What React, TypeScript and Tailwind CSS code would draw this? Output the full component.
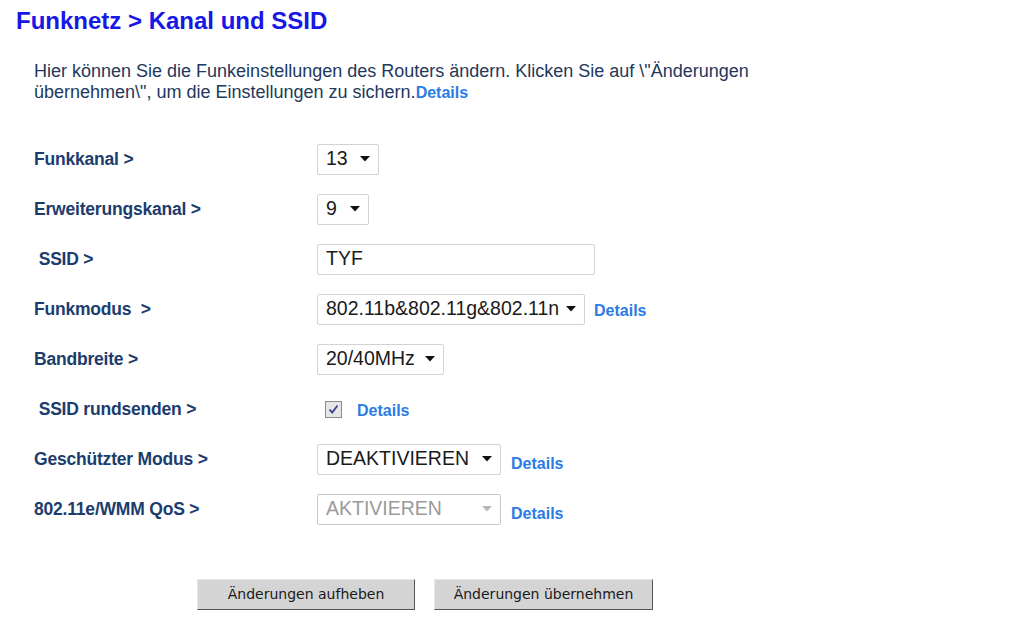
import type { ReactNode } from "react";

const labelClass = "text-[17.5px] font-bold tracking-[-0.2px] text-[#1c3c6e]";
const linkClass = "text-[16px] font-bold text-[#2b7be4]";

function Caret({ disabled }: { disabled?: boolean }) {
  return (
    <svg width="10" height="6" viewBox="0 0 10 6" className="shrink-0">
      <path d="M0 0 L10 0 L5 5.5 Z" fill={disabled ? "#b8b8b8" : "#111"} />
    </svg>
  );
}

function Select({ value, width, disabled }: { value: string; width: string; disabled?: boolean }) {
  return (
    <div
      className={`flex h-[31px] items-center justify-between gap-[6px] rounded-[2px] border bg-white pl-[8px] pr-[8px] text-[19.5px] ${width} ${
        disabled ? "border-[#c8c8c8] text-[#9a9a9a]" : "border-[#d3d3d3] text-[#1a1a1a]"
      }`}
    >
      <span className="whitespace-nowrap">{value}</span>
      <Caret disabled={disabled} />
    </div>
  );
}

function Details() {
  return <span className={linkClass}>Details</span>;
}

function Row({ label, children }: { label: string; children: ReactNode }) {
  return (
    <div className="flex h-[50px] items-center">
      <div className={`w-[283px] whitespace-pre ${labelClass}`}>{label}</div>
      <div className="flex items-center">{children}</div>
    </div>
  );
}

export default function App() {
  return (
    <div className="min-h-[620px] w-[1014px] bg-white font-['Liberation_Sans',Arial,sans-serif]">
      <h1 className="pl-[16px] pt-[7px] text-[24px] leading-[28px] font-bold text-[#1717e6]">
        Funknetz &gt; Kanal und SSID
      </h1>

      <p className="mt-[26px] w-[790px] pl-[34px] text-[18px] leading-[21px] text-[#22385c]">
        Hier können Sie die Funkeinstellungen des Routers ändern. Klicken Sie auf \"Änderungen übernehmen\", um die
        Einstellungen zu sichern.<span className={linkClass}>Details</span>
      </p>

      <div className="mt-[31px] pl-[34px]">
        <Row label="Funkkanal >">
          <Select value="13" width="w-[62px]" />
        </Row>
        <Row label="Erweiterungskanal >">
          <Select value="9" width="w-[52px]" />
        </Row>
        <Row label=" SSID >">
          <div className="flex h-[31px] w-[278px] items-center rounded-[2px] border border-[#d3d3d3] bg-white pl-[8px] text-[19.5px] text-[#1a1a1a]">
            TYF
          </div>
        </Row>
        <Row label="Funkmodus  >">
          <Select value="802.11b&802.11g&802.11n" width="w-[268px]" />
          <div className="ml-[9px] mt-[3px]">
            <Details />
          </div>
        </Row>
        <Row label="Bandbreite >">
          <Select value="20/40MHz" width="w-[127px]" />
        </Row>
        <Row label=" SSID rundsenden >">
          <div className="ml-[8px] flex h-[17px] w-[17px] items-center justify-center border border-[#8a8a8a] bg-[#e6e6e6]">
            <svg width="11" height="11" viewBox="0 0 11 11">
              <path d="M1.5 5.5 L4.2 8.5 L9.5 1.5" fill="none" stroke="#3a3f8f" strokeWidth="1.8" />
            </svg>
          </div>
          <div className="ml-[15px] mt-[3px]">
            <Details />
          </div>
        </Row>
        <Row label="Geschützter Modus >">
          <Select value="DEAKTIVIEREN" width="w-[184px]" />
          <div className="ml-[10px] mt-[9px]">
            <Details />
          </div>
        </Row>
        <Row label="802.11e/WMM QoS >">
          <Select value="AKTIVIEREN" width="w-[184px]" disabled />
          <div className="ml-[10px] mt-[9px]">
            <Details />
          </div>
        </Row>
      </div>

      <div className="mt-[45px] flex gap-[19px] pl-[197px]">
        <button
          type="button"
          className="h-[31px] w-[218px] border border-t-[#e8e8e8] border-l-[#e8e8e8] border-r-[#555] border-b-[#555] bg-[#d4d4d4] font-['DejaVu_Sans',Verdana,sans-serif] text-[14px] text-[#1a1a1a]"
        >
          Änderungen aufheben
        </button>
        <button
          type="button"
          className="h-[31px] w-[219px] border border-t-[#e8e8e8] border-l-[#e8e8e8] border-r-[#555] border-b-[#555] bg-[#d4d4d4] font-['DejaVu_Sans',Verdana,sans-serif] text-[14px] text-[#1a1a1a]"
        >
          Änderungen übernehmen
        </button>
      </div>
    </div>
  );
}
